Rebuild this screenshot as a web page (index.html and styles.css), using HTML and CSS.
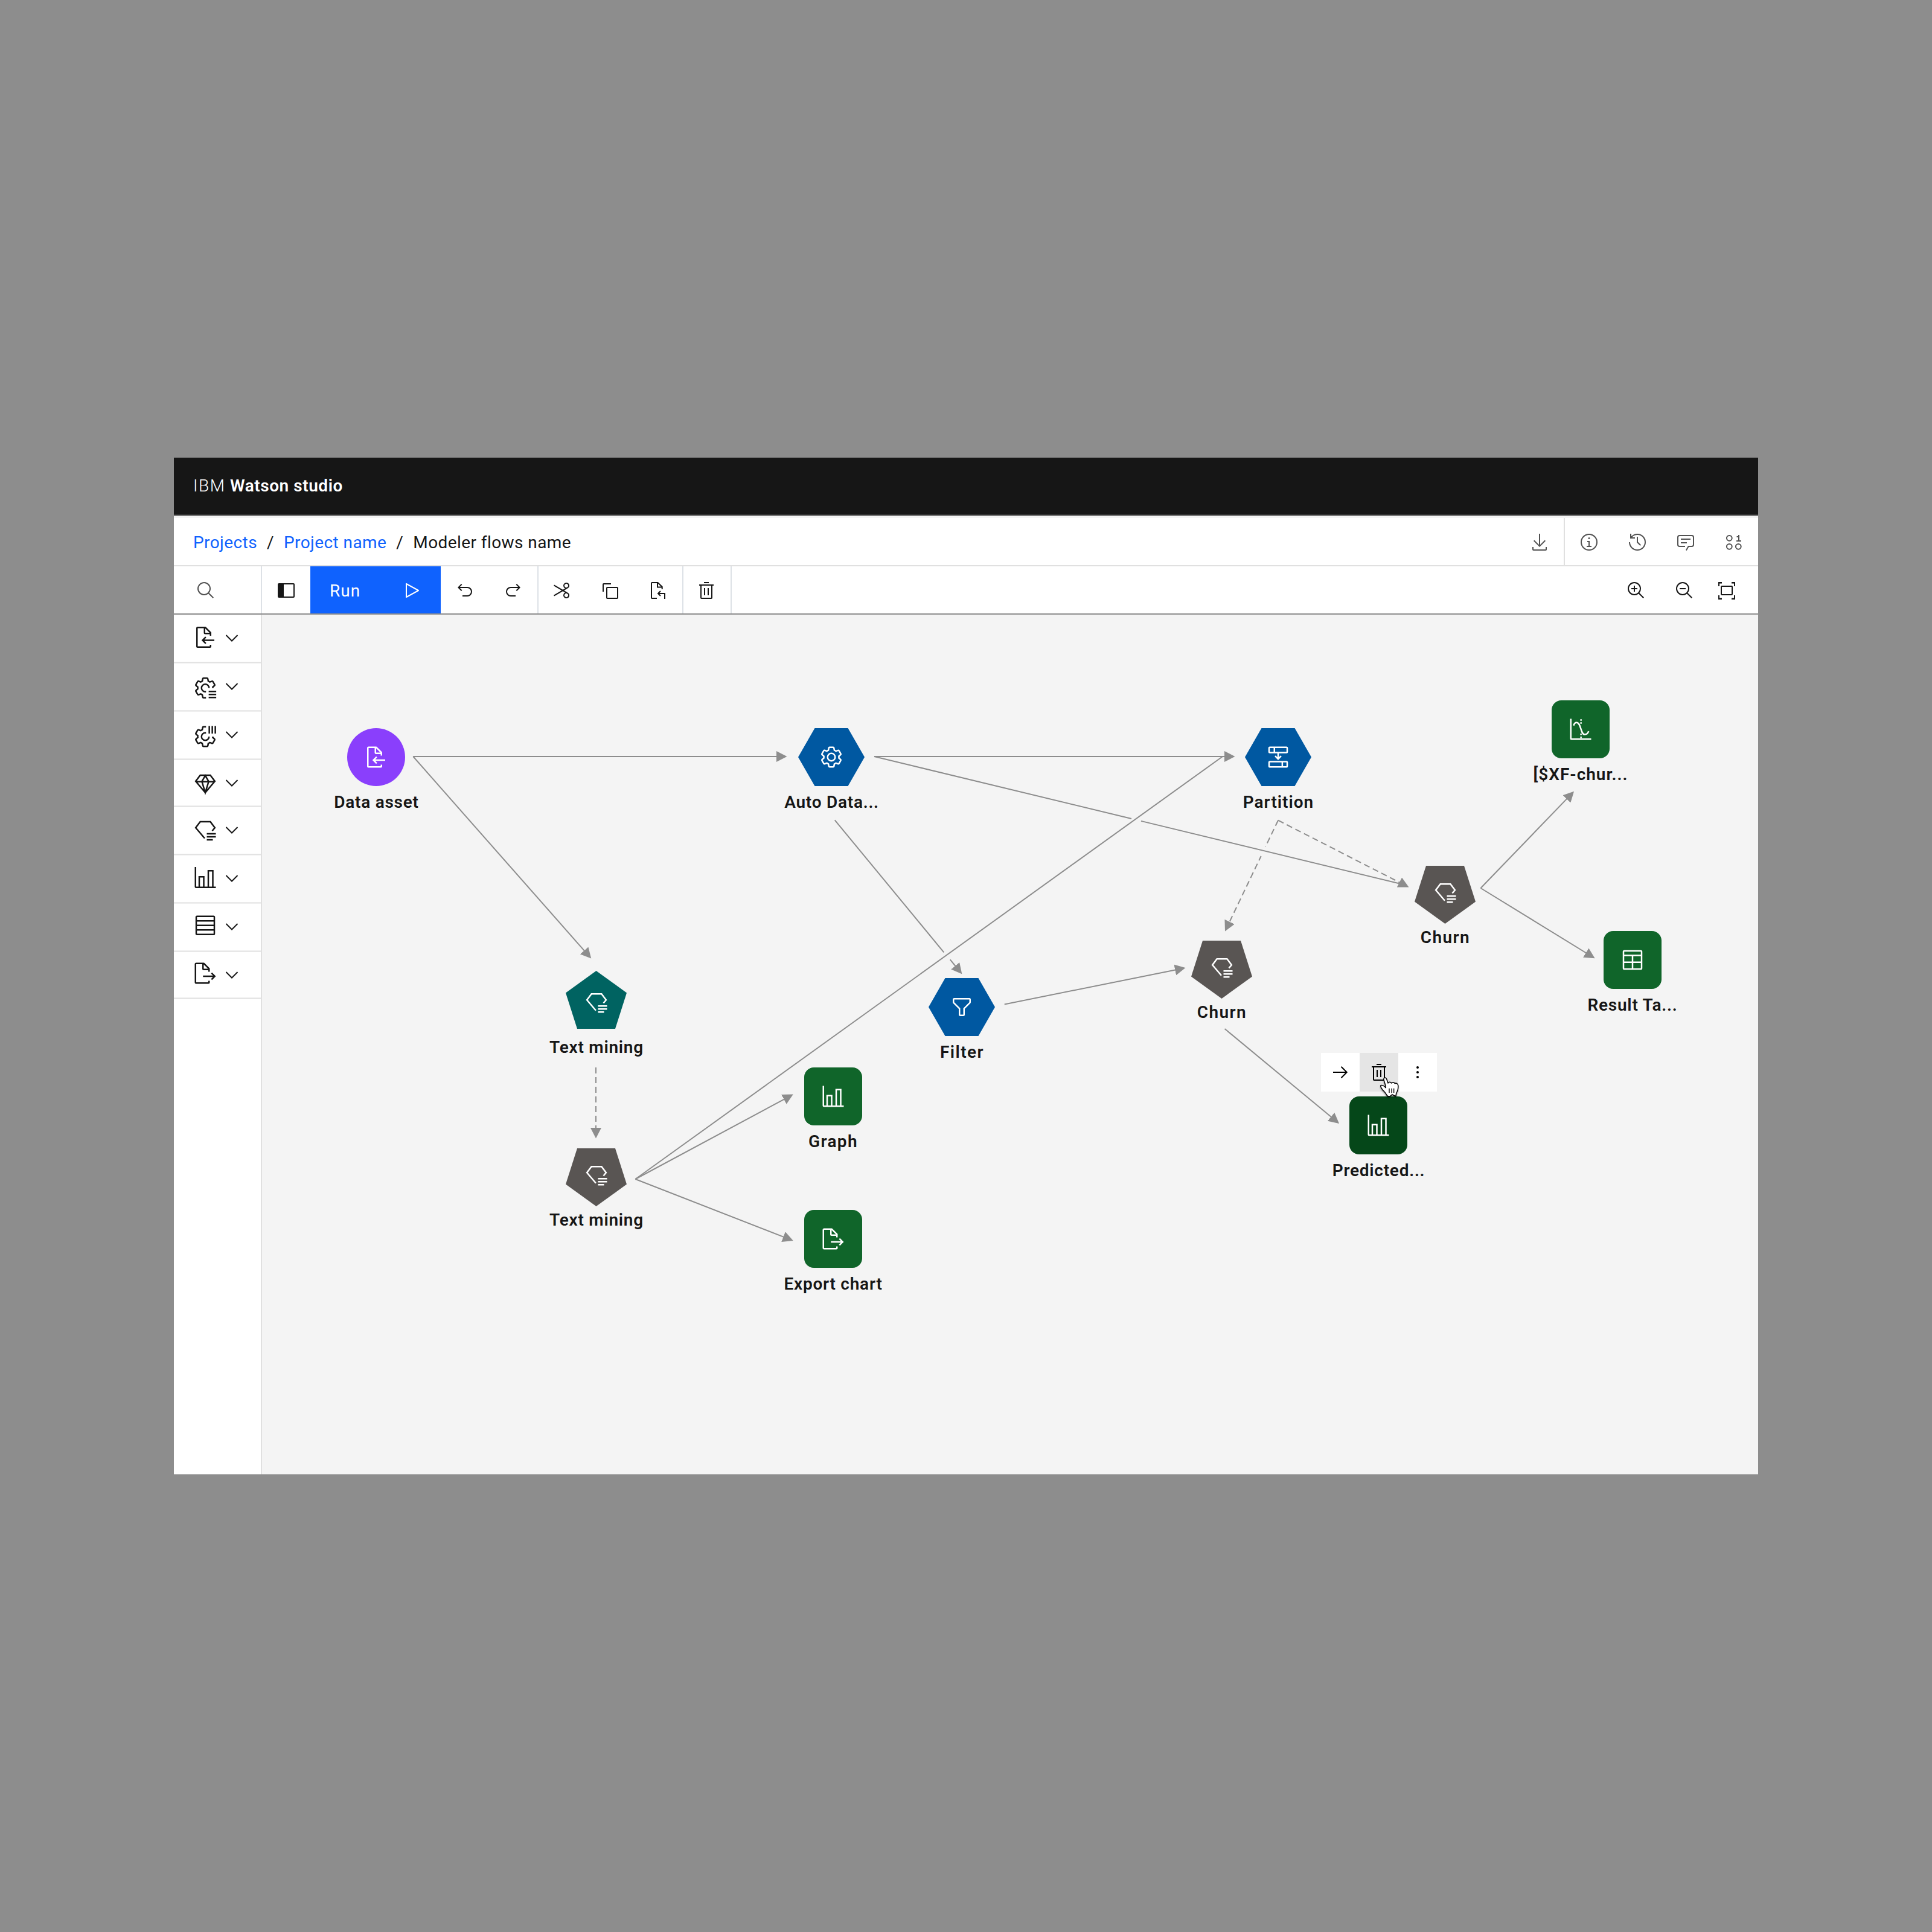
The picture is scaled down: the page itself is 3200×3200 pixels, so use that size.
FILE: index.html
```html
<!DOCTYPE html>
<html lang="en">
<head>
<meta charset="utf-8">
<title>IBM Watson studio</title>
<link rel="stylesheet" href="styles.css">
</head>
<body>
<svg class="sprite" aria-hidden="true">
  <defs>
    <marker id="arrow" markerUnits="userSpaceOnUse" markerWidth="18" markerHeight="18" refX="5.5" refY="9" orient="auto"><path d="M0 0L17.5 9L0 18Z" fill="#8d8d8d"/></marker>
    <clipPath id="cut-lower-right"><path d="M0 0H32V16H17V32H0Z"/></clipPath>
    <clipPath id="cut-upper-right"><path d="M0 0H17V16H32V32H0Z"/></clipPath>
    <symbol id="doc-import" viewBox="0 0 32 32"><path d="M28 19H14.83l2.58-2.59L16 15l-5 5 5 5 1.410-1.410L14.83 21H28z"/><path d="M24,14V10a1,1,0,0,0-.29-.71l-7-7A1,1,0,0,0,16,2H6A2,2,0,0,0,4,4V28a2,2,0,0,0,2,2H22a2,2,0,0,0,2-2V26H22v2H6V4h8v6a2,2,0,0,0,2,2h6v2Zm-8-4V4.41L21.59,10Z"/></symbol>
    <symbol id="doc-export" viewBox="0 0 32 32"><path d="M13 21h13.170l-2.580 2.590L25 25l5-5-5-5-1.410 1.410L26.170 19H13z"/><path d="M22,14V10a1,1,0,0,0-.29-.71l-7-7A1,1,0,0,0,14,2H4A2,2,0,0,0,2,4V28a2,2,0,0,0,2,2H20a2,2,0,0,0,2-2V26H20v2H4V4h8v6a2,2,0,0,0,2,2h6v2Zm-8-4V4.410L19.590,10Z"/></symbol>
    <symbol id="gear" viewBox="0 0 32 32"><g id="gear-shape"><path d="M27,16.76c0-.25,0-.5,0-.76s0-.51,0-.77l1.92-1.68A2,2,0,0,0,29.3,11L26.94,7a2,2,0,0,0-1.73-1,2,2,0,0,0-.64.1l-2.43.82a11.35,11.35,0,0,0-1.31-.75l-.51-2.52a2,2,0,0,0-2-1.61H13.64a2,2,0,0,0-2,1.61l-.51,2.52a11.48,11.48,0,0,0-1.32.75L7.43,6.06A2,2,0,0,0,6.79,6,2,2,0,0,0,5.06,7L2.7,11a2,2,0,0,0,.41,2.51L5,15.24c0,.25,0,.5,0,.76s0,.51,0,.77L3.11,18.45A2,2,0,0,0,2.7,21L5.06,25a2,2,0,0,0,1.73,1,2,2,0,0,0,.64-.1l2.43-.82a11.35,11.35,0,0,0,1.31.75l.51,2.52a2,2,0,0,0,2,1.61h4.72a2,2,0,0,0,2-1.61l.51-2.52a11.48,11.48,0,0,0,1.32-.75l2.42.82a2,2,0,0,0,.64.1,2,2,0,0,0,1.73-1L29.3,21a2,2,0,0,0-.41-2.51ZM25.21,24l-3.43-1.16a8.86,8.86,0,0,1-2.71,1.57L18.36,28H13.64l-.71-3.55a9.36,9.36,0,0,1-2.7-1.57L6.79,24,4.43,20l2.72-2.4a8.9,8.9,0,0,1,0-3.13L4.43,12,6.79,8l3.43,1.16a8.86,8.86,0,0,1,2.71-1.57L13.64,4h4.72l.71,3.55a9.36,9.36,0,0,1,2.7,1.57L25.21,8,27.57,12l-2.72,2.4a8.9,8.9,0,0,1,0,3.13L27.57,20Z"/><path d="M16,22a6,6,0,1,1,6-6A5.94,5.94,0,0,1,16,22Zm0-10a3.91,3.91,0,0,0-4,4,3.91,3.91,0,0,0,4,4,3.91,3.91,0,0,0,4-4A3.91,3.91,0,0,0,16,12Z"/></g></symbol>
    <symbol id="gear-rows" viewBox="0 0 32 32"><use href="#gear-shape" clip-path="url(#cut-lower-right)"/><path class="line" d="M20.500 20.500H30.500M20.500 24.500H30.500M20.500 28.500H30.500"/></symbol>
    <symbol id="gear-columns" viewBox="0 0 32 32"><use href="#gear-shape" clip-path="url(#cut-upper-right)"/><path class="line" d="M21.300 2V12M25.300 2V12M29.300 2V12"/></symbol>
    <symbol id="gem" viewBox="0 0 32 32"><path class="line" d="M9.300 5H22.700L28.700 13L16 28L3.300 13ZM3.300 13.500H28.700M16 5.500L11.500 13.300L16 28L20.500 13.300Z"/></symbol>
    <symbol id="gem-list" viewBox="0 0 32 32"><path class="line" d="M15.200 27L3.300 13L9.300 5H22.700L28.700 13L25.200 17.200M18 21H30M18 25H30M18 29H26"/></symbol>
    <symbol id="bars" viewBox="0 0 32 32"><path d="M27,28V6H19V28H15V14H7V28H4V2H2V28a2,2,0,0,0,2,2H30V28ZM13,28H9V16h4Zm12,0H21V8h4Z"/></symbol>
    <symbol id="rows" viewBox="0 0 32 32"><path class="line" d="M5 4H27a1 1 0 0 1 1 1V27a1 1 0 0 1-1 1H5a1 1 0 0 1-1-1V5a1 1 0 0 1 1-1ZM4 10H28M4 16H28M4 22H28"/></symbol>
    <symbol id="table" viewBox="0 0 32 32"><path class="line" d="M5 4H27a1 1 0 0 1 1 1V27a1 1 0 0 1-1 1H5a1 1 0 0 1-1-1V5a1 1 0 0 1 1-1ZM4 10H28M4 19H28M16 10V28"/></symbol>
    <symbol id="evaluation" viewBox="0 0 32 32"><path class="line" d="M3 2V28a1 1 0 0 0 1 1H30M6.700 11C7.500 8.500 9 7 10.500 7C17 7 15.500 22.800 21.500 22.800C24 22.800 25.700 21 26.600 18.500"/><path d="M15.500 2.500h2v2h-2zM15.500 6.500h2v2h-2zM15.500 21.500h2v2h-2zM15.500 25.500h2v2h-2z"/></symbol>
    <symbol id="partition" viewBox="0 0 32 32"><path class="line" d="M5 3H27a1 1 0 0 1 1 1V9a1 1 0 0 1-1 1H5a1 1 0 0 1-1-1V4a1 1 0 0 1 1-1ZM5 22H27a1 1 0 0 1 1 1V28a1 1 0 0 1-1 1H5a1 1 0 0 1-1-1V23a1 1 0 0 1 1-1ZM11 3V10M21.500 22V29M16 10V18M12 14.500L16 18.500L20 14.500"/></symbol>
    <symbol id="filter" viewBox="0 0 32 32"><path d="M18,28H14a2,2,0,0,1-2-2V18.41L4.59,11A2,2,0,0,1,4,9.59V6A2,2,0,0,1,6,4H26a2,2,0,0,1,2,2V9.590A2,2,0,0,1,27.410,11L20,18.410V26A2,2,0,0,1,18,28ZM6,6V9.590l8,8V26h4V17.590l8-8V6Z"/></symbol>
    <symbol id="trash" viewBox="0 0 32 32"><path d="M12 12h2v12h-2zM18 12h2v12h-2zM4,6V8H6V28a2,2,0,0,0,2,2H24a2,2,0,0,0,2-2V8h2V6ZM8,28V8H24V28ZM12 2h8v2h-8z"/></symbol>
    <symbol id="chevron" viewBox="0 0 32 32"><path class="line" d="M6.500 11L16 20.500L25.500 11"/></symbol>
    <symbol id="search" viewBox="0 0 32 32"><path d="M29,27.5859l-7.5521-7.5521a11.0177,11.0177,0,1,0-1.4141,1.4141L27.5859,29ZM4,13a9,9,0,1,1,9,9A9.01,9.01,0,0,1,4,13Z"/></symbol>
    <symbol id="panel" viewBox="0 0 32 32"><path d="M28 4H4a2 2 0 0 0-2 2V26a2 2 0 0 0 2 2H28a2 2 0 0 0 2-2V6a2 2 0 0 0-2-2ZM28 26H12V6H28Z"/></symbol>
    <symbol id="play" viewBox="0 0 32 32"><path d="M7,28a1,1,0,0,1-1-1V5a1,1,0,0,1,1.4819-.8763l20,11a1,1,0,0,1,0,1.7525l-20,11A1.0005,1.0005,0,0,1,7,28ZM8,6.6909V25.3088L24.9248,16Z"/></symbol>
    <symbol id="undo" viewBox="0 0 32 32"><path d="M20,10H7.8149l3.5874-3.5859L10,5,4,11,10,17l1.4023-1.4146L7.8179,12H20a6,6,0,0,1,0,12H12v2h8a8,8,0,0,0,0-16Z"/></symbol>
    <symbol id="redo" viewBox="0 0 32 32"><path d="M12,10H24.1851L20.5977,6.4141,22,5,28,11,22,17l-1.4023-1.4146L24.1821,12H12a6,6,0,0,0,0,12h8v2H12a8,8,0,0,1,0-16Z"/></symbol>
    <symbol id="cut" viewBox="0 0 32 32"><path d="M26.5,19.63,20.24,16l6.26-3.63a5,5,0,0,0-1.21-9.2A5.19,5.19,0,0,0,24,3a5,5,0,0,0-4.33,7.53,5,5,0,0,0,2.39,2.1l-3.82,2.21L4,6.6,3,8.34,16.24,16,3,23.68l1,1.74,14.24-8.26,3.82,2.21a5,5,0,0,0-2.39,2.1A5,5,0,0,0,24,29a5.19,5.19,0,0,0,1.29-.17,5,5,0,0,0,1.21-9.2ZM21.4,9.5a3,3,0,0,1,1.1-4.1,3,3,0,0,1,4.1,1.1,3,3,0,0,1-1.1,4.1,3,3,0,0,1-4.1-1.1Zm5.2,16a3,3,0,0,1-4.1,1.1,3,3,0,0,1-1.1-4.1,3,3,0,0,1,4.1-1.1A3,3,0,0,1,26.6,25.5Z"/></symbol>
    <symbol id="copy" viewBox="0 0 32 32"><path class="line" d="M12 11H28a1 1 0 0 1 1 1V28a1 1 0 0 1-1 1H12a1 1 0 0 1-1-1V12a1 1 0 0 1 1-1ZM5 18V6a1 1 0 0 1 1-1H18"/></symbol>
    <symbol id="paste" viewBox="0 0 32 32"><path class="line" d="M14 29H6a1 1 0 0 1-1-1V4a1 1 0 0 1 1-1H15.500L22.700 10V14M15 3V10.500H22.700M27 30V21H16M20 17L16 21L20 25"/></symbol>
    <symbol id="zoom-in" viewBox="0 0 32 32"><path d="M18,12H14V8H12v4H8v2h4v4h2V14h4Z"/><path d="M21.4479,20A10.856,10.856,0,0,0,24,13,11,11,0,1,0,13,24a10.856,10.856,0,0,0,7-2.5521L27.5859,29,29,27.5859ZM13,22a9,9,0,1,1,9-9A9.01,9.01,0,0,1,13,22Z"/></symbol>
    <symbol id="zoom-out" viewBox="0 0 32 32"><path d="M8 12H18v2H8z"/><path d="M21.4479,20A10.856,10.856,0,0,0,24,13,11,11,0,1,0,13,24a10.856,10.856,0,0,0,7-2.5521L27.5859,29,29,27.5859ZM13,22a9,9,0,1,1,9-9A9.01,9.01,0,0,1,13,22Z"/></symbol>
    <symbol id="fit" viewBox="0 0 32 32"><path class="line" d="M8 9H24a1 1 0 0 1 1 1V22a1 1 0 0 1-1 1H8a1 1 0 0 1-1-1V10a1 1 0 0 1 1-1Z"/><path d="M2 2H8V4.500H4V9H2ZM24 2H30V9H28V4.500H24ZM2 24H4V28.500H8V31H2ZM28 24H30V31H24V28.500H28Z"/></symbol>
    <symbol id="download" viewBox="0 0 32 32"><path d="M26,24v4H6V24H4v4a2,2,0,0,0,2,2H26a2,2,0,0,0,2-2V24ZM26 14L24.590 12.590 17 20.170 17 2 15 2 15 20.170 7.410 12.590 6 14 16 24Z"/></symbol>
    <symbol id="info" viewBox="0 0 32 32"><circle class="line" cx="16" cy="16" r="13"/><path d="M17 22V14H13v2h2v6H12v2h8V22Z"/><circle cx="16" cy="9.500" r="1.500"/></symbol>
    <symbol id="history" viewBox="0 0 32 32"><path d="M20.590 22L15 16.410V7h2v8.580l5 5.010L20.590 22z"/><path d="M16,2A13.940,13.940,0,0,0,6,6.230V2H4v8h8V8H7.080A12,12,0,1,1,4,16H2A14,14,0,1,0,16,2Z"/></symbol>
    <symbol id="chat" viewBox="0 0 32 32"><path d="M17.740,30,16,29l4-7h6a2,2,0,0,0,2-2V8a2,2,0,0,0-2-2H6A2,2,0,0,0,4,8V20a2,2,0,0,0,2,2h9v2H6a4,4,0,0,1-4-4V8A4,4,0,0,1,6,4H26a4,4,0,0,1,4,4V20a4,4,0,0,1-4,4H21.160ZM8 10H24v2H8zM8 16H18v2H8z"/></symbol>
    <symbol id="binary" viewBox="0 0 32 32"><g class="line"><circle cx="8.300" cy="9.300" r="4.400"/><circle cx="8.300" cy="23.300" r="4.400"/><circle cx="23.300" cy="23.300" r="4.400"/><path d="M20.500 7H24M24 4V14M20 14H28"/></g></symbol>
  </defs>
</svg>

<main class="window">
  <header class="masthead"><span class="masthead-prefix">IBM</span><span class="masthead-name">Watson studio</span></header>

  <div class="crumb-bar">
    <nav class="crumbs"><a class="crumb-link">Projects</a><span class="slash">/</span><a class="crumb-link">Project name</a><span class="slash">/</span><span>Modeler flows name</span></nav>
    <div class="crumb-download"><svg class="icon"><use href="#download"/></svg></div>
    <div class="crumb-actions">
      <svg class="icon"><use href="#info"/></svg>
      <svg class="icon"><use href="#history"/></svg>
      <svg class="icon"><use href="#chat"/></svg>
      <svg class="icon"><use href="#binary"/></svg>
    </div>
  </div>

  <div class="toolbar">
    <div class="tool-search"><svg class="icon"><use href="#search"/></svg></div>
    <div class="tool-panel"><svg class="icon"><use href="#panel"/></svg></div>
    <button class="run"><span>Run</span><svg class="icon"><use href="#play"/></svg></button>
    <div class="tool-group tool-history"><svg class="icon"><use href="#undo"/></svg><svg class="icon"><use href="#redo"/></svg></div>
    <div class="tool-group tool-clipboard"><svg class="icon"><use href="#cut"/></svg><svg class="icon"><use href="#copy"/></svg><svg class="icon"><use href="#paste"/></svg></div>
    <div class="tool-group tool-delete"><svg class="icon"><use href="#trash"/></svg></div>
    <div class="tool-zoom"><svg class="icon"><use href="#zoom-in"/></svg><svg class="icon"><use href="#zoom-out"/></svg><svg class="icon icon-fit"><use href="#fit"/></svg></div>
  </div>

  <div class="workspace">
    <aside class="palette">
      <div class="palette-row"><svg class="palette-icon" viewBox="0 0 40 79"><use href="#doc-import" y="17.500" width="40" height="40"/></svg><svg class="chevron"><use href="#chevron"/></svg></div>
      <div class="palette-row"><svg class="palette-icon" viewBox="0 0 40 79"><use href="#gear-rows" y="21.500" width="40" height="40"/></svg><svg class="chevron"><use href="#chevron"/></svg></div>
      <div class="palette-row"><svg class="palette-icon" viewBox="0 0 40 79"><use href="#gear-columns" y="22" width="40" height="40"/></svg><svg class="chevron"><use href="#chevron"/></svg></div>
      <div class="palette-row palette-row-short"><svg class="palette-icon" viewBox="0 0 40 79"><use href="#gem" y="19.750" width="40" height="40"/></svg><svg class="chevron"><use href="#chevron"/></svg></div>
      <div class="palette-row"><svg class="palette-icon" viewBox="0 0 40 79"><use href="#gem-list" y="18.750" width="40" height="40"/></svg><svg class="chevron"><use href="#chevron"/></svg></div>
      <div class="palette-row"><svg class="palette-icon" viewBox="0 0 40 79"><use href="#bars" y="17.600" width="40" height="40"/></svg><svg class="chevron"><use href="#chevron"/></svg></div>
      <div class="palette-row"><svg class="palette-icon" viewBox="0 0 40 79"><use href="#rows" y="16.800" width="40" height="40"/></svg><svg class="chevron"><use href="#chevron"/></svg></div>
      <div class="palette-row palette-row-short"><svg class="palette-icon" viewBox="0 0 40 79"><use href="#doc-export" y="16" width="40" height="40"/></svg><svg class="chevron"><use href="#chevron"/></svg></div>
    </aside>

    <section class="canvas">
      <svg class="links" viewBox="434 1018 2478 1424">
        <g class="link">
          <path d="M1448 1253L1874 1356M1890 1359.900L2318 1463.500"/>
          <path d="M1382.700 1358.300L1563.300 1577.300"/>
          <path d="M1052.400 1953L2025 1253"/>
          <path class="dash" d="M2117 1358.700L2096 1402.500"/>
        </g>
        <g class="link link-arrow">
          <path d="M684.300 1253H1291.500"/>
          <path d="M684.300 1253L971.300 1578.600"/>
          <path d="M1448 1253H2033.500"/>
          <path d="M1573.700 1589.300L1585.700 1604"/>
          <path d="M1663.700 1663.500L1951.700 1605.400"/>
          <path d="M2452.500 1471L2598.700 1319.400"/>
          <path d="M2452.500 1471L2631.400 1581"/>
          <path d="M2028.500 1704L2208.800 1853.300"/>
          <path d="M1052.400 1953L1303.200 1818.300"/>
          <path d="M1052.400 1953L1302.600 2050.600"/>
          <path class="dash" d="M987 1768V1873.500"/>
          <path class="dash" d="M2117 1358.700L2322.800 1464"/>
          <path class="dash" stroke-dashoffset="2" d="M2088.700 1418L2034.200 1531.700"/>
        </g>
      </svg>

      <div class="node node-asset"><div class="shape"><svg class="outline" viewBox="0 0 96 96" width="96"><circle cx="48" cy="48" r="48"/></svg><svg class="glyph"><use href="#doc-import"/></svg></div><span class="label label-tight">Data asset</span></div>
      <div class="node node-prep"><div class="shape"><svg class="outline" viewBox="0 0 110 96" width="110"><path d="M27.500 0H82.500L110 48L82.500 96H27.500L0 48Z"/></svg><svg class="glyph"><use href="#gear"/></svg></div><span class="label label-tight">Auto Data...</span></div>
      <div class="node node-partition"><div class="shape"><svg class="outline" viewBox="0 0 110 96" width="110"><path d="M27.500 0H82.500L110 48L82.500 96H27.500L0 48Z"/></svg><svg class="glyph"><use href="#partition"/></svg></div><span class="label">Partition</span></div>
      <div class="node node-filter"><div class="shape"><svg class="outline" viewBox="0 0 110 96" width="110"><path d="M27.500 0H82.500L110 48L82.500 96H27.500L0 48Z"/></svg><svg class="glyph"><use href="#filter"/></svg></div><span class="label label-wide">Filter</span></div>
      <div class="node node-evaluation"><div class="shape shape-square"><svg class="glyph"><use href="#evaluation"/></svg></div><span class="label">[$XF-chur...</span></div>
      <div class="node node-result"><div class="shape shape-square"><svg class="glyph"><use href="#table"/></svg></div><span class="label label-tight">Result Ta...</span></div>
      <div class="node node-graph"><div class="shape shape-square"><svg class="glyph"><use href="#bars"/></svg></div><span class="label label-wide">Graph</span></div>
      <div class="node node-export"><div class="shape shape-square"><svg class="glyph"><use href="#doc-export"/></svg></div><span class="label label-tight">Export chart</span></div>
      <div class="node node-predicted"><div class="shape shape-square shape-hover"><svg class="glyph"><use href="#bars"/></svg></div><span class="label label-tight">Predicted...</span></div>
      <div class="node node-mining"><div class="shape shape-up"><svg class="outline" viewBox="0 0 101 96" width="101"><path d="M50.500 0L101 36.500L82 96H19L0 36.500Z"/></svg><svg class="glyph"><use href="#gem-list"/></svg></div><span class="label label-tight">Text mining</span></div>
      <div class="node node-mined node-model"><div class="shape shape-down"><svg class="outline" viewBox="0 0 101 96" width="101"><path d="M50.500 96L101 59.500L82 0H19L0 59.500Z"/></svg><svg class="glyph"><use href="#gem-list"/></svg></div><span class="label label-tight">Text mining</span></div>
      <div class="node node-churn-a node-model"><div class="shape shape-down"><svg class="outline" viewBox="0 0 101 96" width="101"><path d="M50.500 96L101 59.500L82 0H19L0 59.500Z"/></svg><svg class="glyph"><use href="#gem-list"/></svg></div><span class="label label-wide">Churn</span></div>
      <div class="node node-churn-b node-model"><div class="shape shape-down"><svg class="outline" viewBox="0 0 101 96" width="101"><path d="M50.500 96L101 59.500L82 0H19L0 59.500Z"/></svg><svg class="glyph"><use href="#gem-list"/></svg></div><span class="label label-wide">Churn</span></div>

      <div class="node-menu">
        <div class="menu-item"><svg class="icon" viewBox="0 0 32 32"><path class="line" d="M4 16H27M17.500 6.700L26.700 16L17.500 25.300"/></svg></div>
        <div class="menu-item menu-item-active"><svg class="icon"><use href="#trash"/></svg></div>
        <div class="menu-item"><svg class="icon" viewBox="0 0 32 32"><circle cx="16" cy="8" r="2"/><circle cx="16" cy="16" r="2"/><circle cx="16" cy="24" r="2"/></svg></div>
      </div>
      <svg class="pointer" viewBox="0 0 110 110"><path d="M27 20C24 8 37 5 41 16L48 36C51 29 61 29 65 36C69 30 79 31 82 38C88 34 97 38 98 47C99 58 98 68 94 76C90 82 88 88 87 99C78 102 74 94 69 93C64 95 62 101 54 102C44 102 43 98 39 91C34 82 27 76 20 68C16 61 10 55 11 49C16 43 27 48 37 59C37 49 31 33 27 20Z"/><path class="knuckles" d="M54 62V84M66 62V85M77 62V84"/></svg>
    </section>
  </div>
</main>
</body>
</html>
```
FILE: styles.css
```css
* { box-sizing: border-box; }

body {
  margin: 0;
  padding: 758px 288px 0;
  min-height: 3200px;
  background: #8d8d8d;
  color: #161616;
  font: 400 28px/36px Roboto, "Liberation Sans", sans-serif;
  letter-spacing: 0.42px;
}

svg { display: block; flex: none; fill: currentColor; }
.sprite { position: absolute; width: 0; height: 0; }
.line { fill: none; stroke: currentColor; stroke-width: 2; }
.icon { width: 32px; height: 32px; }

.window { width: 2624px; height: 1684px; display: flex; flex-direction: column; background: #fff; }

.masthead {
  height: 96px;
  padding-left: 32px;
  display: flex;
  align-items: center;
  background: #161616;
  border-bottom: 2px solid #393939;
  color: #fff;
}
.masthead-prefix { width: 61px; font-weight: 350; letter-spacing: 1.6px; }
.masthead-name { font-weight: 600; letter-spacing: 0.55px; }

.crumb-bar {
  height: 84px;
  display: flex;
  border-top: 4px solid #f4f4f4;
  border-bottom: 2px solid #e0e0e0;
}
.crumbs { flex: 1; display: flex; align-items: center; padding: 4px 0 0 32px; }
.crumb-link { color: #0f62fe; }
.slash { padding: 0 16px; }
.crumb-download,
.crumb-actions { display: flex; align-items: center; padding: 2px 24px 0; color: #525252; }
.crumb-actions { gap: 48px; border-left: 2px solid #e0e0e0; }

.toolbar { height: 80px; display: flex; border-bottom: 2px solid #8d8d8d; }
.tool-search,
.tool-panel,
.tool-group,
.tool-zoom { display: flex; align-items: center; padding-top: 2px; }
.tool-search { width: 146px; padding-left: 37px; border-right: 2px solid #dde1e6; color: #525252; }
.tool-panel { width: 80px; padding-left: 24px; }
.run {
  width: 216px;
  margin: 0;
  padding: 2px 32px 0;
  display: flex;
  align-items: center;
  justify-content: space-between;
  border: 0;
  background: #0f62fe;
  color: #fff;
  font: inherit;
  letter-spacing: 1px;
}
.run span { padding-top: 1px; }
.tool-group { gap: 48px; border-right: 2px solid #dde1e6; }
.tool-history { width: 162px; padding-left: 24px; }
.tool-clipboard { width: 240px; padding-left: 22px; }
.tool-delete { width: 80px; padding-left: 22px; }
.tool-zoom { margin-left: auto; gap: 48px; padding-right: 36px; }
.icon-fit { margin-left: -10px; }

.workspace { flex: 1; display: flex; }
.palette { width: 146px; border-right: 2px solid #e0e0e0; box-shadow: inset 0 1px #efefef; }
.palette-row {
  height: 80px;
  padding-left: 32px;
  display: flex;
  gap: 8px;
  border-bottom: 1px solid #e0e0e0;
  box-shadow: inset 0 -1px #efefef, 0 1px #efefef;
}
.palette-row-short { height: 78px; }
.palette-icon { width: 40px; height: 79px; }
.chevron { width: 32px; height: 32px; margin-top: 23px; }

.canvas { position: relative; flex: 1; background: #f4f4f4; }
.links { width: 2478px; height: 1424px; }
.link { fill: none; stroke: #8d8d8d; stroke-width: 2; }
.link-arrow path { marker-end: url(#arrow); }
.dash { stroke-dasharray: 10 6; }

.node { position: absolute; width: 200px; display: flex; flex-direction: column; align-items: center; }
.shape { height: 96px; display: grid; place-items: center; }
.outline, .glyph { grid-area: 1 / 1; }
.outline { height: 96px; }
.glyph { width: 40px; height: 40px; color: #fff; }
.shape-square { width: 96px; border-radius: 16px; background: #10652a; }
.shape-hover { background: #054719; }
.shape-down .glyph { margin-bottom: 8px; }
.shape-up .glyph { margin-top: 8px; }
.label { margin-top: 9px; padding-left: 1px; color: #161616; font-weight: 600; letter-spacing: 1px; white-space: nowrap; }
.label-tight { letter-spacing: 0.75px; }
.label-wide { letter-spacing: 1.4px; }

.node-asset { left: 89px; top: 188px; color: #8a3ffc; }
.node-prep { left: 843px; top: 188px; color: #0058a1; }
.node-partition { left: 1583px; top: 188px; color: #0058a1; }
.node-filter { left: 1059px; top: 602px; color: #0058a1; }
.node-evaluation { left: 2083.5px; top: 142px; }
.node-result { left: 2169.5px; top: 524px; }
.node-graph { left: 845.5px; top: 750px; }
.node-export { left: 845.5px; top: 986px; }
.node-predicted { left: 1749px; top: 798px; }
.node-mining { left: 453.5px; top: 590px; color: #006361; }
.node-mining .label { margin-top: 13px; }
.node-model { color: #595553; }
.node-model .label { margin-top: 5px; }
.node-mined { left: 453.5px; top: 884px; }
.node-churn-a { left: 1859.5px; top: 416px; }
.node-churn-b { left: 1489.5px; top: 540px; }

.node-menu { position: absolute; left: 1754px; top: 726px; display: flex; background: #fff; color: #000; }
.menu-item { width: 64px; height: 64px; display: grid; place-items: center; }
.menu-item-active { background: #e5e5e5; }

.pointer {
  position: absolute;
  left: 1849.3px;
  top: 763.7px;
  width: 36.7px;
  height: 36.7px;
  overflow: visible;
  fill: #fff;
  stroke: #000;
  stroke-width: 4.5;
  stroke-linejoin: round;
  filter: drop-shadow(0 2px 1px rgba(0, 0, 0, 0.35));
}
.knuckles { fill: none; stroke-width: 4; }
```
